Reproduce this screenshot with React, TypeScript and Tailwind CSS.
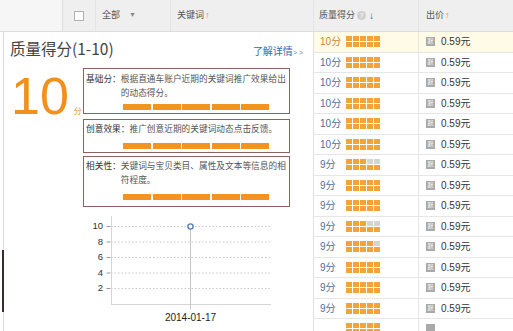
import React from 'react';

const FONT = "font-['Liberation_Sans','Noto_Sans_CJK_SC',sans-serif]";

type Row = { score: number; gray: number };

const rows: Row[] = [
    { score: 10, gray: 0 },
    { score: 10, gray: 0 },
    { score: 10, gray: 0 },
    { score: 10, gray: 0 },
    { score: 10, gray: 0 },
    { score: 10, gray: 0 },
    { score: 9, gray: 2 },
    { score: 9, gray: 0 },
    { score: 9, gray: 0 },
    { score: 9, gray: 2 },
    { score: 9, gray: 1 },
    { score: 9, gray: 0 },
    { score: 9, gray: 0 },
    { score: 9, gray: 0 },
];

const ScoreIcon: React.FC<{ gray: number }> = ({ gray }) => (
    <div className="flex gap-[1px]">
        {[0, 1, 2, 3, 4].map(i => (
            <div key={i} className="flex flex-col gap-[1px]">
                <div className={i >= 5 - gray ? 'w-[6px] h-[5px] bg-[#d4d4d4]' : 'w-[6px] h-[5px] bg-[#f2a33a]'} />
                <div className="w-[6px] h-[5px] bg-[#f2a33a]" />
            </div>
        ))}
    </div>
);

const Bars: React.FC<{ className?: string }> = ({ className }) => (
    <div className={`flex gap-[1.5px] pl-[37px] ${className ?? ''}`}>
        {[0, 1, 2, 3, 4].map(i => (
            <div key={i} className="w-[28px] h-[6px] bg-[#f29322]" />
        ))}
    </div>
);

const InfoBox: React.FC<{ label: string; lines: string[]; className?: string; barsClass?: string }> = ({ label, lines, className, barsClass }) => (
    <div className={`border border-[#8e6060] pl-[2px] ${className ?? ''}`}>
        <div className="flex text-[8.7px] leading-[14px] text-[#555]">
            <span className="text-[#333] shrink-0">{label}</span>
            <div className="flex flex-col">
                {lines.map((l, i) => <span key={i} className="whitespace-nowrap">{l}</span>)}
            </div>
        </div>
        <Bars className={barsClass} />
    </div>
);

const Chart = () => {
    const ys = [16.5, 32, 47.5, 63, 78.5];
    const labels = ['10', '8', '6', '4', '2'];
    return (
        <svg width="200" height="121" viewBox="0 0 200 121" className="block">
            {ys.map((y, i) => (
                <g key={i}>
                    <text x="19" y={y} textAnchor="end" dominantBaseline="middle" fontSize="9.5" fill="#333" fontFamily="Liberation Sans, sans-serif">{labels[i]}</text>
                    <line x1="22.5" y1={y} x2="26.5" y2={y} stroke="#999" strokeWidth="1" />
                    <line x1="27" y1={y} x2="187" y2={y} stroke="#c8c8c8" strokeWidth="1" strokeDasharray="1.5 2" />
                </g>
            ))}
            <line x1="27.5" y1="6" x2="27.5" y2="94" stroke="#d6d6d6" strokeWidth="1" />
            <line x1="27" y1="94.5" x2="187" y2="94.5" stroke="#d6d6d6" strokeWidth="1" />
            <line x1="106.5" y1="16.5" x2="106.5" y2="99" stroke="#c4c4c4" strokeWidth="1" />
            <circle cx="106.5" cy="16.5" r="2.6" fill="#fff" stroke="#4f7fb8" strokeWidth="1.4" />
            <text x="106.5" y="108.5" textAnchor="middle" dominantBaseline="middle" fontSize="10" fill="#222" fontFamily="Liberation Sans, sans-serif">2014-01-17</text>
        </svg>
    );
};

export default function App() {
    return (
        <div className={`relative w-[513px] h-[331px] overflow-hidden bg-white ${FONT}`}>
            {/* table header */}
            <div className="flex h-[32px] border-b border-[#dcdcdc] text-[9px] text-[#555]">
                <div className="w-[62px] bg-[#f6f6f6]" />
                <div className="w-[33px] bg-[#efefef] border-l border-[#dcdcdc] flex items-center justify-center">
                    <div className="w-[10px] h-[10px] bg-white border border-[#b0b0b0]" />
                </div>
                <div className="w-[75px] bg-[#efefef] border-l border-[#e4e4e4] flex items-center pl-[6px] gap-[9px]">
                    <span>全部</span>
                    <span className="text-[7px] text-[#888]">▼</span>
                </div>
                <div className="w-[143px] bg-[#efefef] border-l border-[#e4e4e4] flex items-center pl-[6px]">
                    <span>关键词</span>
                    <span className="text-[#999] text-[9px] ml-[1px]">↑</span>
                </div>
                <div className="w-[105px] bg-[#efefef] border-l border-[#e4e4e4] flex items-center pl-[5px]">
                    <span>质量得分</span>
                    <span className="ml-[2px] w-[9px] h-[9px] rounded-full bg-[#cfcfcf] text-white text-[7px] leading-[9px] text-center">?</span>
                    <span className="ml-[3px] text-[#1f5fb0] font-bold text-[10px]">↓</span>
                </div>
                <div className="flex-1 bg-[#efefef] border-l border-[#e4e4e4] flex items-center pl-[7px]">
                    <span>出价</span>
                    <span className="text-[#999] text-[9px] ml-[1px]">↑</span>
                </div>
            </div>

            <div className="flex">
                {/* popup panel */}
                <div className="w-[313px] h-[299px] pl-[3px] pr-[2px]">
                    <div className="h-full border-l border-[#dadada] pl-[6px]">
                        <div className="flex items-baseline justify-between pt-[6px] pr-[8px]">
                            <span className="text-[15.5px] leading-[20px] text-[#444] font-['Noto_Sans_CJK_SC',sans-serif]">质量得分(1-10)</span>
                            <span className="text-[10px] text-[#2e6bb0]">
                                了解详情<span className="text-[7px] text-[#6688aa]">&gt; &gt;</span>
                            </span>
                        </div>
                        <div className="flex mt-[9px]">
                            <div className="w-[73px] flex items-baseline pt-[2px]">
                                <span className="text-[52px] leading-[52px] text-[#f0901e] ml-[1px]">10</span>
                                <span className="text-[8px] text-[#f0901e] ml-[5px]">分</span>
                            </div>
                            <div className="w-[207px] flex flex-col">
                                <InfoBox
                                    label="基础分："
                                    lines={['根据直通车账户近期的关键词推广效果给出', '的动态得分。']}
                                    className="pt-[3px] pb-[3px]"
                                    barsClass="mt-[4px]"
                                />
                                <InfoBox
                                    label="创意效果："
                                    lines={['推广创意近期的关键词动态点击反馈。']}
                                    className="mt-[5px] pt-[2px] pb-[3px]"
                                    barsClass="mt-[7px]"
                                />
                                <InfoBox
                                    label="相关性："
                                    lines={['关键词与宝贝类目、属性及文本等信息的相', '符程度。']}
                                    className="mt-[3px] pt-[2px] pb-[6px]"
                                    barsClass="mt-[7px]"
                                />
                            </div>
                        </div>
                        <div className="pl-[74px] mt-[3px]">
                            <Chart />
                        </div>
                    </div>
                </div>

                {/* table rows */}
                <div className="flex-1 flex flex-col">
                    {rows.map((r, i) => (
                        <div
                            key={i}
                            className={`flex h-[20.5px] border-b border-[#e6e6e6] text-[10px] ${i === 0 ? 'bg-[#fffbe6]' : 'bg-white'}`}
                        >
                            <div className="w-[105px] border-l border-[#e0e0e0] flex items-center pl-[6px]">
                                <span className={`w-[26px] ${i === 0 ? 'text-[#c8893f]' : 'text-[#4d6f98]'}`}>{r.score}分</span>
                                <ScoreIcon gray={r.gray} />
                            </div>
                            <div className="flex-1 border-l border-[#e6e6e6] flex items-center pl-[7px]">
                                <span className="w-[9px] h-[9px] bg-[#a9a9a9] text-white text-[6px] leading-[9px] text-center">默</span>
                                <span className="ml-[6px] text-[#333]">0.59元</span>
                            </div>
                        </div>
                    ))}
                    {/* partially visible next row */}
                    <div className="flex h-[20.5px]">
                        <div className="w-[105px] border-l border-[#e0e0e0] flex items-start pt-[4px] pl-[32px]">
                            <ScoreIcon gray={0} />
                        </div>
                        <div className="flex-1 border-l border-[#e6e6e6] flex items-start pt-[5px] pl-[7px]">
                            <span className="w-[9px] h-[9px] bg-[#a9a9a9]" />
                        </div>
                    </div>
                </div>
            </div>

            {/* stray dark edge behind popup */}
            <div className="absolute left-[2px] top-[250px] w-[1.5px] h-[62px] bg-[#3a2a2a]" />
        </div>
    );
}
